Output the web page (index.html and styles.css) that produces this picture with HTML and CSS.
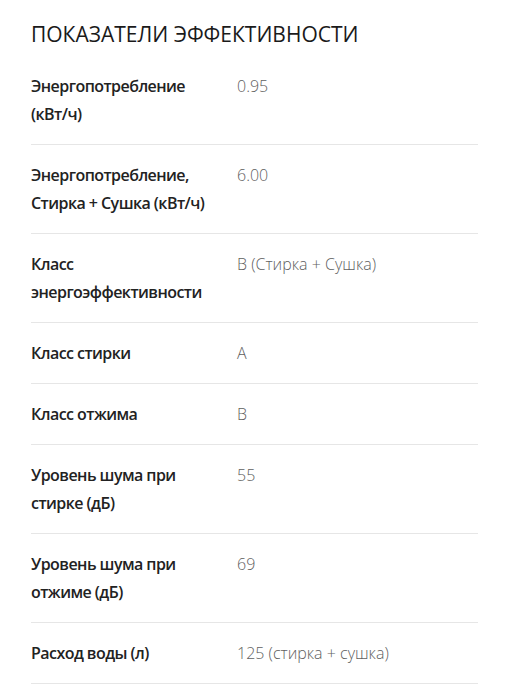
FILE: index.html
```html
<!DOCTYPE html>
<html lang="ru">
<head>
<meta charset="utf-8">
<link rel="stylesheet" href="styles.css">
</head>
<body>
<section class="specs">
  <h2 class="specs-title">ПОКАЗАТЕЛИ ЭФФЕКТИВНОСТИ</h2>
  <div class="spec-list">
    <div class="spec-row"><div class="spec-label">Энергопотребление (кВт/ч)</div><div class="spec-value">0.95</div></div>
    <div class="spec-row"><div class="spec-label">Энергопотребление, Стирка + Сушка (кВт/ч)</div><div class="spec-value">6.00</div></div>
    <div class="spec-row"><div class="spec-label">Класс энергоэффективности</div><div class="spec-value">B (Стирка + Сушка)</div></div>
    <div class="spec-row"><div class="spec-label">Класс стирки</div><div class="spec-value">A</div></div>
    <div class="spec-row"><div class="spec-label">Класс отжима</div><div class="spec-value">B</div></div>
    <div class="spec-row"><div class="spec-label">Уровень шума при стирке (дБ)</div><div class="spec-value">55</div></div>
    <div class="spec-row"><div class="spec-label">Уровень шума при отжиме (дБ)</div><div class="spec-value">69</div></div>
    <div class="spec-row"><div class="spec-label">Расход воды (л)</div><div class="spec-value">125 (стирка + сушка)</div></div>
  </div>
</section>
</body>
</html>
```

FILE: styles.css
```css
html, body {
  margin: 0;
  padding: 0;
  background: #fff;
}
body {
  font-family: "Open Sans", "Noto Sans", sans-serif;
  color: #222;
}
.specs {
  padding: 20px 30px 0 31px;
}
.specs-title {
  margin: 0;
  font-size: 21px;
  font-weight: 400;
  line-height: 29px;
  color: #1a1a1a;
}
.spec-list {
  margin-top: 7px;
}
.spec-row {
  display: flex;
  padding: 16px 0 16px;
  border-bottom: 1px solid #e6e6e6;
  font-size: 16px;
  line-height: 28px;
}
.spec-label {
  width: 185px;
  margin-right: 21px;
  flex: none;
  font-weight: 600;
  letter-spacing: -0.55px;
  color: #222;
}
.spec-value {
  font-weight: 300;
  color: #5f5f5f;
}
```
